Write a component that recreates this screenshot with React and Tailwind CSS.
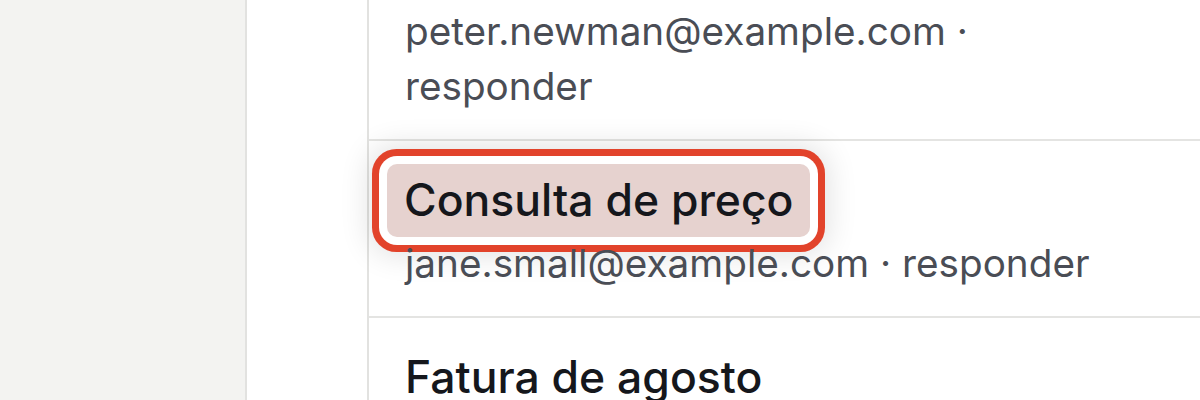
const messages = [
  { subject: 'Reunião de equipe', from: 'peter.newman@example.com', wrap: true },
  { subject: 'Consulta de preço', from: 'jane.small@example.com', active: true },
  { subject: 'Fatura de agosto', from: 'billing@example.com' },
];

function Row({ msg }) {
  return (
    <li className="border-b-2 border-[#e4e4e2] pl-[36px] pr-6 pt-[32px] pb-[25px]">
      <div className="flex h-[54px] items-center">
        {msg.active ? (
          <span className="-mx-[18px] inline-block rounded-[10px] bg-[#e6d2cf] px-[17px] py-[9px] text-[44.5px] leading-[55px] font-medium text-[#15171c] shadow-[0_0_0_8px_#ffffff,0_0_0_15px_#e2432b,0_0_30px_18px_rgba(0,0,0,0.12)]">
            {msg.subject}
          </span>
        ) : (
          <span className="text-[44.5px] leading-[55px] font-medium text-[#15171c]">{msg.subject}</span>
        )}
      </div>
      <p className={`mt-[9px] text-[38.7px] leading-[55px] text-[#4a4d55] ${msg.wrap ? 'w-[620px]' : ''}`}>
        {msg.from} · responder
      </p>
    </li>
  );
}

export default function App() {
  return (
    <div className="flex h-[400px] w-[1200px] overflow-hidden bg-white" style={{ fontFamily: 'Inter, "Noto Sans", sans-serif' }}>
      <aside className="w-[247px] shrink-0 border-r-2 border-[#e2e2e0] bg-[#f3f3f1]" />
      <div className="w-[122px] shrink-0 border-r-2 border-[#e2e2e0] bg-white" />
      <ul className="-mt-[91px] flex-1">
        {messages.map((msg) => (
          <Row key={msg.subject} msg={msg} />
        ))}
      </ul>
    </div>
  );
}
